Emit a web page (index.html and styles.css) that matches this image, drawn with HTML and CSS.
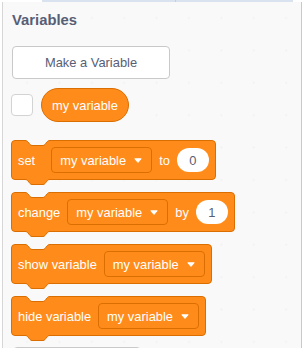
FILE: index.html
```html
<!DOCTYPE html>
<html lang="en">
<head>
    <meta charset="UTF-8">
    <meta name="viewport" content="width=device-width, initial-scale=1.0">
    <title>Variables</title>
    <link rel="stylesheet" href="styles.css">
</head>
<body>

    <div class="top-edge">
        <div class="tab-strip tab-first"></div>
        <div class="tab-strip tab-second"></div>
    </div>

    <div class="palette">
        <div class="category-title">Variables</div>

        <button class="flyout-button">Make a Variable</button>

        <div class="reporter-row">
            <span class="checkbox"></span>
            <span class="reporter">my variable</span>
        </div>

        <!-- set -->
        <div class="block">
            <svg class="notch" viewBox="0 0 25 7"><path class="notch-fill" d="M0,0.5 C1.5,0.5 2.2,1 3,2 L5,4.5 C5.6,5.2 6.2,5.5 7,5.5 H18 C18.8,5.5 19.4,5.2 20,4.5 L22,2 C22.8,1 23.5,0.5 25,0.5 L25,0 L0,0 Z"/><path class="notch-line" d="M0,0.5 C1.5,0.5 2.2,1 3,2 L5,4.5 C5.6,5.2 6.2,5.5 7,5.5 H18 C18.8,5.5 19.4,5.2 20,4.5 L22,2 C22.8,1 23.5,0.5 25,0.5"/></svg>
            <span class="block-text set-text">set</span>
            <span class="dropdown">my variable <svg class="arrow" viewBox="0 0 8 5"><path d="M0.8,0.8 H7.2 L4,4.4 Z"/></svg></span>
            <span class="block-text">to</span>
            <span class="num-input">0</span>
            <svg class="tab" viewBox="0 0 25 7"><path class="tab-fill" d="M0,0.5 C1.5,0.5 2.2,1 3,2 L5,4.5 C5.6,5.2 6.2,5.5 7,5.5 H18 C18.8,5.5 19.4,5.2 20,4.5 L22,2 C22.8,1 23.5,0.5 25,0.5 L25,0 L0,0 Z"/><path class="notch-line" d="M0,0.5 C1.5,0.5 2.2,1 3,2 L5,4.5 C5.6,5.2 6.2,5.5 7,5.5 H18 C18.8,5.5 19.4,5.2 20,4.5 L22,2 C22.8,1 23.5,0.5 25,0.5"/></svg>
        </div>

        <!-- change -->
        <div class="block">
            <svg class="notch" viewBox="0 0 25 7"><path class="notch-fill" d="M0,0.5 C1.5,0.5 2.2,1 3,2 L5,4.5 C5.6,5.2 6.2,5.5 7,5.5 H18 C18.8,5.5 19.4,5.2 20,4.5 L22,2 C22.8,1 23.5,0.5 25,0.5 L25,0 L0,0 Z"/><path class="notch-line" d="M0,0.5 C1.5,0.5 2.2,1 3,2 L5,4.5 C5.6,5.2 6.2,5.5 7,5.5 H18 C18.8,5.5 19.4,5.2 20,4.5 L22,2 C22.8,1 23.5,0.5 25,0.5"/></svg>
            <span class="block-text">change</span>
            <span class="dropdown">my variable <svg class="arrow" viewBox="0 0 8 5"><path d="M0.8,0.8 H7.2 L4,4.4 Z"/></svg></span>
            <span class="block-text">by</span>
            <span class="num-input">1</span>
            <svg class="tab" viewBox="0 0 25 7"><path class="tab-fill" d="M0,0.5 C1.5,0.5 2.2,1 3,2 L5,4.5 C5.6,5.2 6.2,5.5 7,5.5 H18 C18.8,5.5 19.4,5.2 20,4.5 L22,2 C22.8,1 23.5,0.5 25,0.5 L25,0 L0,0 Z"/><path class="notch-line" d="M0,0.5 C1.5,0.5 2.2,1 3,2 L5,4.5 C5.6,5.2 6.2,5.5 7,5.5 H18 C18.8,5.5 19.4,5.2 20,4.5 L22,2 C22.8,1 23.5,0.5 25,0.5"/></svg>
        </div>

        <!-- show variable -->
        <div class="block">
            <svg class="notch" viewBox="0 0 25 7"><path class="notch-fill" d="M0,0.5 C1.5,0.5 2.2,1 3,2 L5,4.5 C5.6,5.2 6.2,5.5 7,5.5 H18 C18.8,5.5 19.4,5.2 20,4.5 L22,2 C22.8,1 23.5,0.5 25,0.5 L25,0 L0,0 Z"/><path class="notch-line" d="M0,0.5 C1.5,0.5 2.2,1 3,2 L5,4.5 C5.6,5.2 6.2,5.5 7,5.5 H18 C18.8,5.5 19.4,5.2 20,4.5 L22,2 C22.8,1 23.5,0.5 25,0.5"/></svg>
            <span class="block-text">show variable</span>
            <span class="dropdown">my variable <svg class="arrow" viewBox="0 0 8 5"><path d="M0.8,0.8 H7.2 L4,4.4 Z"/></svg></span>
            <svg class="tab" viewBox="0 0 25 7"><path class="tab-fill" d="M0,0.5 C1.5,0.5 2.2,1 3,2 L5,4.5 C5.6,5.2 6.2,5.5 7,5.5 H18 C18.8,5.5 19.4,5.2 20,4.5 L22,2 C22.8,1 23.5,0.5 25,0.5 L25,0 L0,0 Z"/><path class="notch-line" d="M0,0.5 C1.5,0.5 2.2,1 3,2 L5,4.5 C5.6,5.2 6.2,5.5 7,5.5 H18 C18.8,5.5 19.4,5.2 20,4.5 L22,2 C22.8,1 23.5,0.5 25,0.5"/></svg>
        </div>

        <!-- hide variable -->
        <div class="block">
            <svg class="notch" viewBox="0 0 25 7"><path class="notch-fill" d="M0,0.5 C1.5,0.5 2.2,1 3,2 L5,4.5 C5.6,5.2 6.2,5.5 7,5.5 H18 C18.8,5.5 19.4,5.2 20,4.5 L22,2 C22.8,1 23.5,0.5 25,0.5 L25,0 L0,0 Z"/><path class="notch-line" d="M0,0.5 C1.5,0.5 2.2,1 3,2 L5,4.5 C5.6,5.2 6.2,5.5 7,5.5 H18 C18.8,5.5 19.4,5.2 20,4.5 L22,2 C22.8,1 23.5,0.5 25,0.5"/></svg>
            <span class="block-text">hide variable</span>
            <span class="dropdown">my variable <svg class="arrow" viewBox="0 0 8 5"><path d="M0.8,0.8 H7.2 L4,4.4 Z"/></svg></span>
            <svg class="tab" viewBox="0 0 25 7"><path class="tab-fill" d="M0,0.5 C1.5,0.5 2.2,1 3,2 L5,4.5 C5.6,5.2 6.2,5.5 7,5.5 H18 C18.8,5.5 19.4,5.2 20,4.5 L22,2 C22.8,1 23.5,0.5 25,0.5 L25,0 L0,0 Z"/><path class="notch-line" d="M0,0.5 C1.5,0.5 2.2,1 3,2 L5,4.5 C5.6,5.2 6.2,5.5 7,5.5 H18 C18.8,5.5 19.4,5.2 20,4.5 L22,2 C22.8,1 23.5,0.5 25,0.5"/></svg>
        </div>

        <!-- top edge of the next button, the rest is scrolled out of view -->
        <div class="next-button"></div>
    </div>

</body>
</html>
```

FILE: styles.css
```css
html, body {
    margin: 0;
    padding: 0;
    height: 100%;
    overflow: hidden;
    background-color: #fff;
    font-family: "Liberation Sans", Arial, sans-serif;
}

/* thin strip of the tab bar above the palette */
.top-edge {
    display: flex;
    height: 2px;
    padding-left: 42px;
}

.tab-strip {
    height: 2px;
    background-color: #d9e2ef;
}

.tab-first {
    width: 133px;
    border-right: 1px solid #c3cddb;
}

.tab-second {
    width: 117px;
}

.palette {
    margin-left: 2px;
    width: 300px;
    height: 346px;
    box-sizing: border-box;
    overflow: hidden;
    border-left: 1px solid #d6d6d6;
    border-right: 1px solid #c9c9c9;
    background-color: #f9f9f9;
    background-image: radial-gradient(circle, #f0f0f0 0.8px, transparent 1.2px);
    background-size: 32.4px 32.4px;
    background-position: 7.8px -0.2px;
    padding: 9px 0 0 8px;
    display: flex;
    flex-direction: column;
    align-items: flex-start;
}

.palette > * {
    flex-shrink: 0;
}

.category-title {
    font-size: 14.8px;
    font-weight: bold;
    line-height: 18px;
    color: #575e75;
    margin-left: 1px;
}

.flyout-button {
    margin: 17px 0 0 1px;
    width: 158px;
    height: 33px;
    box-sizing: border-box;
    padding: 0;
    border: 1px solid #c9c9c9;
    border-radius: 4px;
    background-color: #fff;
    font-family: inherit;
    font-size: 12.9px;
    color: #575e75;
}

.next-button {
    width: 128px;
    height: 33px;
    margin: -1px 0 0 2px;
    box-sizing: border-box;
    border: 1px solid #c9c9c9;
    border-radius: 4px;
    background-color: #fff;
}

.reporter-row {
    display: flex;
    align-items: center;
    gap: 8px;
    margin-top: 9px;
    margin-bottom: 18px;
}

.checkbox {
    width: 22px;
    height: 22px;
    box-sizing: border-box;
    border: 1px solid #d3d3d3;
    border-radius: 4px;
    background-color: #fff;
}

.reporter {
    display: flex;
    align-items: center;
    height: 34px;
    box-sizing: border-box;
    padding: 0 10px;
    border: 1px solid #db6e00;
    border-radius: 17px;
    background-color: #ff8c1a;
    color: #fff;
    font-size: 12.9px;
}

/* stack blocks */
.block {
    position: relative;
    display: flex;
    align-items: center;
    gap: 7px;
    height: 40px;
    box-sizing: border-box;
    padding: 0 6px;
    margin-bottom: 12px;
    border: 1px solid #db6e00;
    border-radius: 4px;
    background-color: #ff8c1a;
    color: #fff;
    font-size: 12.9px;
}

.block-text {
    white-space: nowrap;
}

.set-text {
    margin-right: 9px;
}

.notch,
.tab {
    position: absolute;
    left: 13px;
    width: 25px;
    height: 7px;
    overflow: visible;
}

.notch {
    top: -1px;
}

.tab {
    top: 100%;
}

.notch-fill {
    fill: #f9f9f9;
}

.tab-fill {
    fill: #ff8c1a;
}

.notch-line {
    fill: none;
    stroke: #db6e00;
    stroke-width: 1;
}

.dropdown {
    display: flex;
    align-items: center;
    gap: 8px;
    height: 26px;
    box-sizing: border-box;
    padding: 0 9px 0 8px;
    border: 1px solid #db6e00;
    border-radius: 4px;
    white-space: nowrap;
}

.arrow {
    width: 8px;
    height: 5px;
}

.arrow path {
    fill: #fff;
    stroke: #fff;
    stroke-width: 1;
    stroke-linejoin: round;
}

.num-input {
    display: flex;
    align-items: center;
    justify-content: center;
    min-width: 32px;
    height: 24px;
    border-radius: 12px;
    background-color: #fff;
    color: #575e75;
}
```
